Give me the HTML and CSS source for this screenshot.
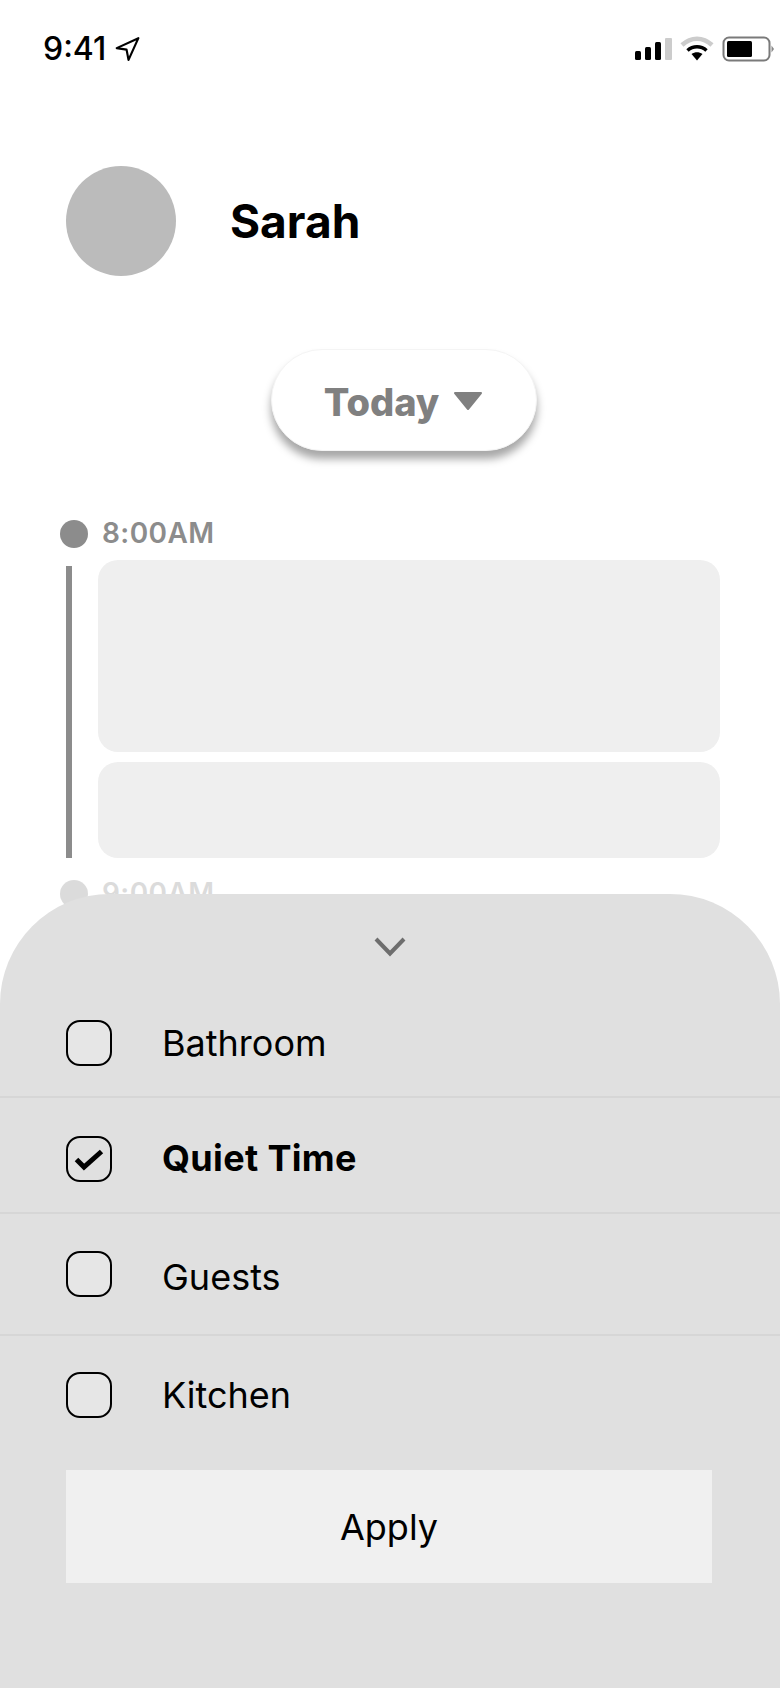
FILE: index.html
```html
<!DOCTYPE html>
<html lang="en">
<head>
<meta charset="utf-8">
<title>Sarah</title>
<link rel="stylesheet" href="styles.css">
</head>
<body>
<div class="screen">
  <header class="status">
    <div class="status-left">
      <span class="clock">9:41</span>
      <svg class="loc" width="26" height="26" viewBox="0 0 24 24"><path d="M22.5 2 2.5 11.2 11.6 12.6 13.4 22Z" fill="none" stroke="#000" stroke-width="2" stroke-linejoin="round"/></svg>
    </div>
    <div class="status-right">
      <svg width="38" height="24" viewBox="0 0 38 24"><rect x="1" y="14" width="6" height="9" rx="1.5" fill="#000"/><rect x="11" y="10" width="6" height="13" rx="1.5" fill="#000"/><rect x="21" y="5" width="6" height="18" rx="1.5" fill="#000"/><rect x="31" y="1" width="7" height="22" rx="1" fill="#ccc"/></svg>
      <svg width="34" height="26" viewBox="0 0 34 26"><path d="M2 9C11 0.500 23 0.500 32 9" fill="none" stroke="#ccc" stroke-width="4.500"/><path d="M7.500 14.500C13 9.500 21 9.500 26.500 14.500" fill="none" stroke="#000" stroke-width="3.500"/><path d="M11.500 18C15 15.500 19 15.500 22.500 18L17 24.500Z" fill="#000"/></svg>
      <svg width="52" height="26" viewBox="0 0 52 26"><rect x="1.500" y="1.500" width="46" height="23" rx="5.500" fill="none" stroke="#7a7a7a" stroke-width="2"/><rect x="5" y="5" width="25" height="16" rx="1.500" fill="#000"/><path d="M49.500 9.500 52 13 49.500 16.500Z" fill="#888"/></svg>
    </div>
  </header>

  <section class="profile">
    <div class="avatar"></div>
    <h1 class="name">Sarah</h1>
  </section>

  <div class="filter-wrap">
    <button class="filter" type="button">
      <span class="filter-label">Today</span>
      <svg class="filter-caret" width="30" height="20" viewBox="0 0 30 20"><path d="M2 2H28L15 18Z" fill="#808080" stroke="#808080" stroke-width="2" stroke-linejoin="round"/></svg>
    </button>
  </div>

  <section class="timeline">
    <div class="slot-head"><span class="dot"></span><span class="time">8:00AM</span></div>
    <div class="slot-body">
      <div class="rail"></div>
      <div class="cards">
        <div class="card card-tall"></div>
        <div class="card card-short"></div>
      </div>
    </div>
    <div class="slot-head slot-faded"><span class="dot"></span><span class="time">9:00AM</span></div>
  </section>

  <section class="sheet">
    <div class="handle">
      <svg width="32" height="20" viewBox="0 0 32 20"><path d="M2 2 16 16.500 30 2" fill="none" stroke="#6e6e6e" stroke-width="4"/></svg>
    </div>
    <ul class="options">
      <li class="option opt-a"><span class="box"></span><span>Bathroom</span></li>
      <li class="option opt-b selected"><span class="box"><svg width="30" height="24" viewBox="0 0 30 24"><path d="M2.500 12.500 10 20 27.500 4.500" fill="none" stroke="#000" stroke-width="5"/></svg></span><span class="strong">Quiet Time</span></li>
      <li class="option opt-c"><span class="box"></span><span class="label-low">Guests</span></li>
      <li class="option opt-d"><span class="box"></span><span>Kitchen</span></li>
    </ul>
    <button class="apply" type="button">Apply</button>
  </section>
</div>
</body>
</html>
```

FILE: styles.css
```css
* { box-sizing: border-box; }
html, body { margin: 0; padding: 0; }
body { background: #fff; font-family: Inter, "Liberation Sans", sans-serif; color: #000; }
.screen { position: relative; width: 780px; height: 1688px; overflow: hidden; background: #fff; }

.status { display: flex; justify-content: space-between; align-items: center; height: 48px; margin-top: 25px; padding: 0 6px 0 43px; }
.status-left { display: flex; align-items: center; gap: 8px; }
.clock { font-size: 32px; font-weight: 500; line-height: 48px; }
.status-right { display: flex; align-items: center; gap: 8px; }

.profile { display: flex; align-items: center; gap: 54px; padding: 93px 0 0 66px; }
.avatar { width: 110px; height: 110px; border-radius: 50%; background: #bbb; }
.name { margin: 0; font-size: 46px; font-weight: 700; line-height: 56px; }

.filter-wrap { display: flex; justify-content: center; padding: 73px 0 0 27px; }
.filter { display: flex; align-items: center; justify-content: center; gap: 14px; width: 266px; height: 102px; border: 1px solid #f4f4f4; border-radius: 51px; background: #fff; box-shadow: 0 8px 8px rgba(0,0,0,.35); font-family: Inter, sans-serif; font-size: 38px; font-weight: 800; color: #808080; }
.filter-label { margin-top: 3px; }
.filter-caret { margin-top: 1px; }

.timeline { padding: 69px 60px 0 60px; }
.slot-head { display: flex; align-items: center; gap: 14px; height: 28px; }
.dot { width: 28px; height: 28px; border-radius: 50%; background: #8c8c8c; }
.time { font-size: 28px; font-weight: 600; color: #8c8c8c; line-height: 26px; letter-spacing: .4px; margin-top: -2px; }
.slot-body { display: flex; gap: 26px; margin-top: 12px; padding-left: 6px; }
.rail { width: 6px; height: 292px; margin-top: 6px; background: #8c8c8c; }
.cards { display: flex; flex-direction: column; gap: 10px; width: 622px; }
.card { background: #efefef; border-radius: 20px; }
.card-tall { height: 192px; }
.card-short { height: 96px; }
.slot-faded { margin-top: 22px; opacity: .3; }

.sheet { position: absolute; left: 0; right: 0; top: 894px; bottom: 0; background: #e0e0e0; border-radius: 110px 110px 0 0; }
.handle { display: flex; justify-content: center; padding-top: 43px; height: 100px; }
.options { list-style: none; margin: 0; padding: 0; }
.option { display: flex; align-items: center; gap: 50px; padding-left: 66px; font-size: 36px; line-height: 46px; border-bottom: 2px solid #d6d6d6; }
.opt-a { height: 104px; padding-bottom: 4px; }
.opt-b { height: 116px; padding-top: 8px; }
.opt-c { height: 122px; }
.opt-d { height: 120px; padding-bottom: 2px; border-bottom: 0; }
.box { display: flex; align-items: center; justify-content: center; width: 46px; height: 46px; border: 2px solid #000; border-radius: 14px; background: #e6e6e6; }
.selected { font-weight: 700; }
.selected .box { background: transparent; }
.strong { letter-spacing: .35px; margin-top: -3px; }
.label-low { margin-top: 6px; }
.apply { display: block; width: 646px; height: 113px; margin: 14px 0 0 66px; border: 0; background: #f0f0f0; font-family: Inter, sans-serif; font-size: 36px; color: #000; }
```
